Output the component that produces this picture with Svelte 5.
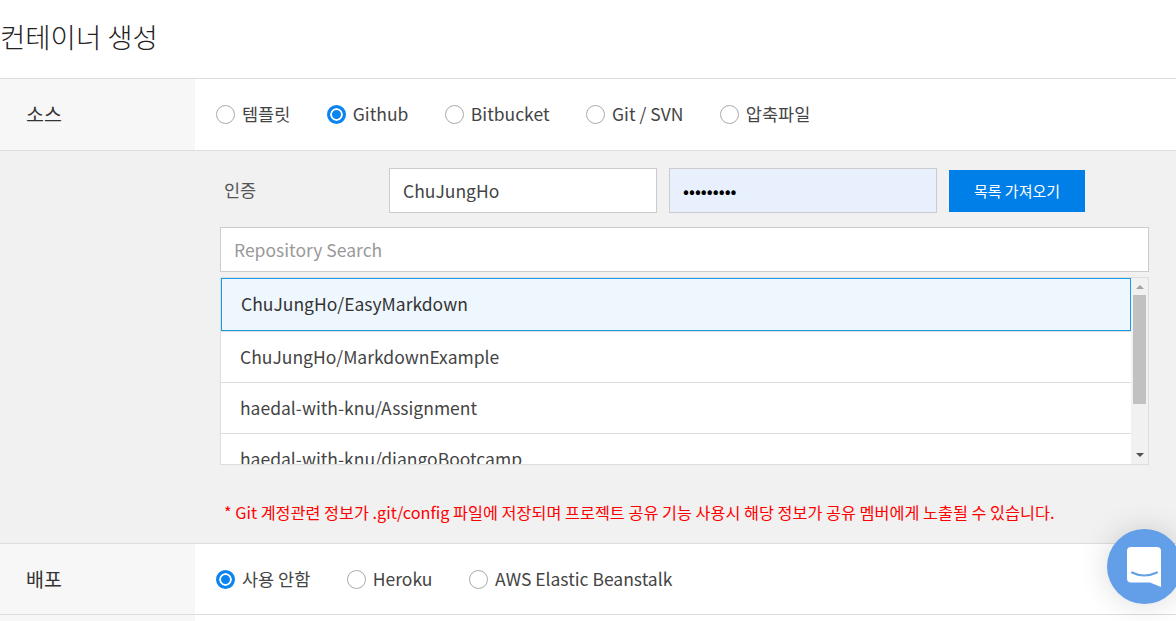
<script>
	let sources = ['템플릿', 'Github', 'Bitbucket', 'Git / SVN', '압축파일'];
	let deploys = ['사용 안함', 'Heroku', 'AWS Elastic Beanstalk'];
	let source = $state('Github');
	let deploy = $state('사용 안함');
	let user = $state('ChuJungHo');
	let pass = $state('*********');
	let selected = $state('ChuJungHo/EasyMarkdown');
	let repos = [
		'ChuJungHo/EasyMarkdown',
		'ChuJungHo/MarkdownExample',
		'haedal-with-knu/Assignment',
		'haedal-with-knu/djangoBootcamp'
	];
</script>

<div class="page">
	<h1>컨테이너 생성</h1>

	<section class="row">
		<div class="label">소스</div>
		<div class="options">
			{#each sources as s}
				<label class="radio">
					<input type="radio" name="source" value={s} bind:group={source} />
					<span>{s}</span>
				</label>
			{/each}
		</div>
	</section>

	<section class="panel">
		<div class="auth">
			<span class="auth-label">인증</span>
			<input class="text" type="text" bind:value={user} />
			<input class="text pw" type="password" bind:value={pass} />
			<button type="button" class="fetch">목록 가져오기</button>
		</div>
		<input class="search" type="text" placeholder="Repository Search" />
		<div class="list">
			<ul>
				{#each repos as r}
					<li class:active={selected === r}>{r}</li>
				{/each}
			</ul>
			<div class="scrollbar">
				<i class="arrow up"></i>
				<div class="track"><div class="thumb"></div></div>
				<i class="arrow down"></i>
			</div>
		</div>
		<p class="notice">* Git 계정관련 정보가 .git/config 파일에 저장되며 프로젝트 공유 기능 사용시 해당 정보가 공유 멤버에게 노출될 수 있습니다.</p>
	</section>

	<section class="row deploy">
		<div class="label">배포</div>
		<div class="options">
			{#each deploys as d}
				<label class="radio">
					<input type="radio" name="deploy" value={d} bind:group={deploy} />
					<span>{d}</span>
				</label>
			{/each}
		</div>
	</section>

	<section class="row last">
		<div class="label"></div>
	</section>

	<button type="button" class="chat" aria-label="chat">
		<svg width="36" height="41" viewBox="0 0 36 41">
			<path d="M5 0H31a4 4 0 0 1 4 4V40L24 35.500H5a4 4 0 0 1-4-4V4a4 4 0 0 1 4-4Z" fill="#fff" />
			<path d="M6 25.500Q18 31.500 31 25.500" fill="none" stroke="#629fe8" stroke-width="2" stroke-linecap="round" />
		</svg>
	</button>
</div>

<style>
	:global(body) {
		overflow: hidden;
	}
	.page {
		position: relative;
		height: 621px;
		overflow: hidden;
		background: #fff;
		color: #444;
		font-family: 'Noto Sans CJK KR', 'Noto Sans', sans-serif;
		font-size: 17.5px;
	}
	h1 {
		margin: 0;
		height: 78px;
		line-height: 72px;
		font-size: 27.500px;
		font-weight: 300;
		color: #222;
		border-bottom: 1px solid #ddd;
		box-sizing: content-box;
	}

	.row {
		display: flex;
		height: 71px;
		border-bottom: 1px solid #ddd;
	}
	.row.deploy {
		height: 70px;
	}
	.label {
		width: 169px;
		padding-left: 26px;
		background: #f7f7f7;
		line-height: 69px;
		font-size: 19.500px;
		color: #333;
	}
	.options {
		display: flex;
		align-items: center;
		padding-left: 21px;
		gap: 36.5px;
	}
	.radio {
		display: flex;
		align-items: center;
		gap: 7px;
	}
	.radio span {
		margin-top: -2px;
	}
	.radio input {
		appearance: none;
		margin: 0;
		width: 19px;
		height: 19px;
		border: 1px solid #aaa;
		border-radius: 50%;
		background: #fff;
	}
	.radio input:checked {
		border: 3px solid #0a84f0;
		background: #0a84f0;
		box-shadow: inset 0 0 0 2px #fff;
	}

	.panel {
		height: 393px;
		box-sizing: border-box;
		padding: 17px 27px 0 220px;
		background: #f1f1f1;
		border-bottom: 1px solid #ddd;
	}
	.auth {
		display: flex;
		align-items: center;
		height: 45px;
	}
	.auth-label {
		width: 165px;
		padding-left: 4px;
		margin-top: -3px;
		font-size: 17.500px;
		color: #555;
	}
	.text {
		box-sizing: border-box;
		width: 268px;
		height: 45px;
		margin-right: 12px;
		padding: 0 13px;
		border: 1px solid #ccc;
		background: #fff;
		font: inherit;
		color: #444;
		outline: none;
	}
	.pw {
		background: #e8f0fd;
		color: #000;
	}
	.fetch {
		width: 136px;
		height: 42px;
		border: 0;
		background: #007fe8;
		color: #fff;
		font: inherit;
		font-size: 15px;
	}
	.search {
		display: block;
		box-sizing: border-box;
		width: 929px;
		height: 45px;
		margin-top: 14px;
		padding: 0 13px;
		border: 1px solid #ccc;
		background: #fff;
		font: inherit;
		outline: none;
	}
	.search::placeholder {
		color: #999;
	}

	.list {
		display: flex;
		width: 929px;
		height: 188px;
		box-sizing: border-box;
		margin-top: 5px;
		border: 1px solid #ddd;
		background: #fff;
		overflow: hidden;
	}
	ul {
		flex: 1;
		margin: 0;
		padding: 0;
		list-style: none;
		overflow: hidden;
	}
	li {
		box-sizing: border-box;
		height: 51px;
		line-height: 50px;
		padding-left: 19px;
		border-bottom: 1px solid #ddd;
	}
	li.active {
		height: 53px;
		margin-bottom: 1px;
		line-height: 50px;
		padding-left: 19px;
		border: 1px solid #1a9be8;
		background: #eff7fe;
		color: #333;
		box-shadow: 0 1px 0 #ddd;
	}

	.scrollbar {
		display: flex;
		flex-direction: column;
		width: 17px;
		background: #f1f1f1;
	}
	.arrow {
		display: block;
		height: 16px;
		position: relative;
	}
	.arrow::after {
		content: '';
		position: absolute;
		left: 5px;
		border-left: 4px solid transparent;
		border-right: 4px solid transparent;
	}
	.up::after {
		top: 7px;
		border-bottom: 4px solid #a3a3a3;
	}
	.down::after {
		top: 5px;
		border-top: 4px solid #505050;
	}
	.track {
		flex: 1;
	}
	.thumb {
		height: 109px;
		margin: 1px 2px 0;
		background: #c1c1c1;
	}

	.notice {
		margin: 35px 0 0 4px;
		font-size: 16.250px;
		line-height: 24px;
		color: #f00;
	}

	.last {
		border: 0;
	}

	.chat {
		position: absolute;
		left: 1107px;
		top: 529px;
		width: 75px;
		height: 75px;
		padding: 0;
		border: 0;
		border-radius: 50%;
		background: #629fe8;
		box-shadow: 0 0 30px rgba(0, 0, 0, 0.15);
	}
	.chat svg {
		position: absolute;
		left: 19px;
		top: 18px;
	}
</style>
